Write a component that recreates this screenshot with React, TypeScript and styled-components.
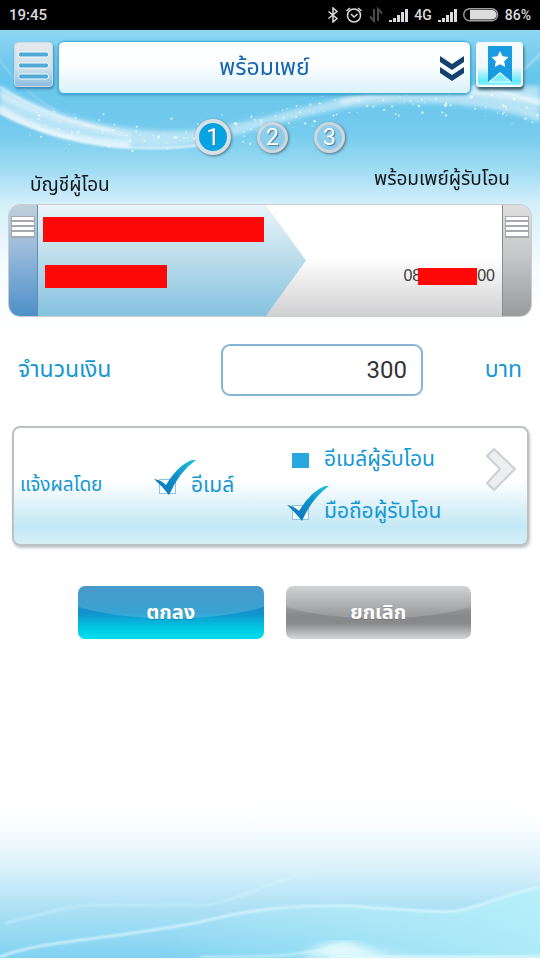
import React, { useState } from "react";
import styled, { createGlobalStyle } from "styled-components";

const thai = `"Noto Sans Thai", "Noto Sans", "Open Sans", "Liberation Sans", sans-serif`;

const GlobalStyle = createGlobalStyle`
  * { box-sizing: border-box; }
  body { margin: 0; background: #fff; font-family: ${thai}; }
  button, input, select { font: inherit; margin: 0; }
`;

const Page = styled.div`
  position: relative;
  display: flex;
  flex-direction: column;
  min-height: 100vh;
  overflow: hidden;
  background: #fff;
`;

const StatusBar = styled.header`
  display: flex;
  align-items: center;
  height: 30px;
  padding: 0 9px;
  background: #000;
  color: #dcdcdc;
  font: 500 15px/30px Roboto, sans-serif;
`;

const StatusIcons = styled.div`
  display: flex;
  align-items: center;
  gap: 6px;
  margin-left: auto;
  font-size: 14px;
  svg { display: block; }
`;

const Main = styled.main`
  position: relative;
  z-index: 0;
  display: flex;
  flex: 1;
  flex-direction: column;
`;

const Sky = styled.svg`
  position: absolute;
  z-index: -1;
  top: 0;
  left: 0;
  width: 100%;
  height: 300px;
`;

const Toolbar = styled.nav`
  display: flex;
  align-items: flex-start;
  gap: 5px;
  padding: 11px 17px 0 14px;
`;

const IconButton = styled.button<{ $wide?: boolean }>`
  width: ${(p) => (p.$wide ? 47 : 39)}px;
  height: 45px;
  margin-top: 1px;
  padding: 0;
  border: ${(p) => (p.$wide ? "2px solid #f4fbfe" : "1px solid #c5dbe8")};
  border-radius: 4px;
  background: ${(p) =>
    p.$wide
      ? "linear-gradient(#f7fcfe 0, #f0f9fd 55%, #5fe9fa 90%, #8ff2fc 100%)"
      : "linear-gradient(#e6e9ed 0, #cfdfea 60%, #8dbce2 100%)"};
  box-shadow: ${(p) => (p.$wide ? "1px 3px 3px #44606e" : "1px 2px 3px #3f87ae")};
  svg { display: block; margin: 0 auto; }
`;

const TitleBox = styled.div`
  position: relative;
  flex: 1;
  height: 53px;
  svg {
    position: absolute;
    top: 14px;
    right: 6px;
    pointer-events: none;
  }
`;

const TitleSelect = styled.select`
  width: 100%;
  height: 100%;
  padding: 0 40px;
  appearance: none;
  border: 1px solid #42afd9;
  border-radius: 6px;
  background: linear-gradient(#fff 0, #fcfeff 45%, #d9f2fb 100%);
  box-shadow: 0 1px 3px #2f93bd;
  color: #1766b0;
  font-size: 23px;
  text-align: center;
  text-align-last: center;
`;

const Steps = styled.ol`
  display: flex;
  align-items: center;
  justify-content: center;
  gap: 26px;
  height: 38px;
  margin: 24px 0 0;
  padding: 0;
  list-style: none;
`;

const Step = styled.li<{ $current?: boolean }>`
  width: ${(p) => (p.$current ? 36 : 31)}px;
  height: ${(p) => (p.$current ? 36 : 31)}px;
  border: ${(p) => (p.$current ? 4 : 3)}px solid ${(p) => (p.$current ? "#dae1e6" : "#cfd7dd")};
  border-radius: 50%;
  background: ${(p) => (p.$current ? "#06a3e2" : "#8ccdeb")};
  box-shadow: 1px 1px 3px #4f7486;
  color: #fff;
  font: ${(p) => (p.$current ? "24px/28px" : "23px/25px")} Roboto, sans-serif;
  text-align: center;
  text-shadow: 1px 1px 1px #4c7d96;
`;

const AccountLabels = styled.div`
  display: flex;
  align-items: flex-start;
  justify-content: space-between;
  height: 48px;
  padding: 8px 30px 0;
  color: #10171c;
  font-size: 19px;
  line-height: 32px;
`;

const FromLabel = styled.span`
  padding-top: 6px;
`;

const TransferCard = styled.section`
  display: grid;
  grid-template-columns: 29px 1fr 29px;
  height: 113px;
  margin: 0 8px;
  overflow: hidden;
  border: 1px solid #cacdcf;
  border-radius: 12px;
`;

const Tab = styled.button<{ $side: "from" | "to" }>`
  display: flex;
  justify-content: center;
  padding: 11px 0 0;
  border: 0;
  border-${(p) => (p.$side === "from" ? "right" : "left")}: 1px solid
    ${(p) => (p.$side === "from" ? "#6c8cab" : "#8b8d8f")};
  background: ${(p) =>
    p.$side === "from"
      ? "linear-gradient(#bfd0dc 0, #9abadb 40%, #4d90c9 100%)"
      : "linear-gradient(#dedede 0, #c6c7c8 45%, #9a9b9d 100%)"};
`;

const CardBody = styled.div`
  display: grid;
  grid-template-columns: 268px 1fr;
  background: linear-gradient(#fff 0, #fff 48%, #d0d0d2 100%);
`;

const Sender = styled.div`
  display: flex;
  flex-direction: column;
  gap: 23px;
  padding: 12px 5px;
  clip-path: polygon(0 0, 85% 0, 100% 50%, 85% 100%, 0 100%);
  background: linear-gradient(#e9f5fa 0, #c3e1ee 40%, #85c2df 100%);
`;

const Mask = styled.span<{ $w: number; $h: number; $indent?: boolean }>`
  flex: none;
  width: ${(p) => p.$w}px;
  height: ${(p) => p.$h}px;
  margin-left: ${(p) => (p.$indent ? 2 : 0)}px;
  background: #fd0707;
`;

const Phone = styled.div`
  display: flex;
  align-items: center;
  justify-content: flex-end;
  align-self: end;
  padding: 0 7px 30px 0;
  color: #3a3a3c;
  font: 16px/20px "Liberation Sans", sans-serif;
`;

const PhoneMask = styled(Mask)`
  margin-left: -3px;
`;

const AmountRow = styled.div`
  display: grid;
  grid-template-columns: 203px 202px 1fr;
  align-items: center;
  margin-top: 27px;
  padding: 0 18px;
  color: #1597d4;
  font-size: 23px;
  line-height: 40px;
`;

const AmountInput = styled.input`
  width: 100%;
  height: 52px;
  padding: 0 14px;
  border: 2px solid #86b4d4;
  border-radius: 9px;
  background: #fff;
  color: #333;
  font: 24px Roboto, sans-serif;
  text-align: right;
`;

const Unit = styled.span`
  text-align: right;
`;

const NotifyPanel = styled.section`
  display: grid;
  grid-template-columns: 139px 133px 1fr 32px;
  align-items: center;
  height: 120px;
  margin: 30px 11px 0 12px;
  padding: 0 10px 0 6px;
  border: 2px solid #bcc0c3;
  border-radius: 8px;
  background: linear-gradient(#fff 0, #fff 45%, #c3e8f5 85%, #d5f0f9 100%);
  box-shadow: 1px 2px 3px #c0c4c6;
  color: #1597d4;
  font-size: 21px;
  line-height: 32px;
`;

const NotifyTitle = styled.span`
  font-size: 19px;
`;

const Options = styled.div`
  display: flex;
  flex-direction: column;
  gap: 20px;
`;

const CheckLabel = styled.label`
  position: relative;
  display: flex;
  align-items: center;
  gap: 15px;
  white-space: nowrap;
  svg {
    position: absolute;
    left: -5px;
    top: -10px;
    pointer-events: none;
  }
`;

const Box = styled.input`
  flex: none;
  width: 17px;
  height: 15px;
  appearance: none;
  border: 1px solid #27a8e0;
  background: #27a8e0;
  &:checked {
    border-color: #8ac7e6;
    background: #f4fbfe;
  }
`;

const NextButton = styled.button`
  align-self: start;
  margin-top: 19px;
  padding: 0;
  border: 0;
  background: none;
  svg { display: block; }
`;

const Actions = styled.div`
  display: grid;
  grid-template-columns: 1fr 1fr;
  gap: 22px;
  margin: 40px 69px 0 78px;
`;

const ActionButton = styled.button<{ $primary?: boolean }>`
  height: 53px;
  padding: 0;
  border: 0;
  border-radius: 7px;
  background:
    radial-gradient(ellipse 66% 62% at 50% 0, rgba(255, 255, 255, 0.16) 97%, transparent 100%),
    ${(p) =>
      p.$primary
        ? "linear-gradient(#2786c1 0, #1391cb 50%, #00c4e2 78%, #00e0ef 100%)"
        : "linear-gradient(#c8c9ca 0, #88898b 55%, #88898b 70%, #d6d7d8 100%)"};
  color: #fff;
  font-size: 20px;
  font-weight: 700;
  line-height: 40px;
  text-shadow: 0 1px 1px rgba(0, 0, 0, 0.15);
`;

const Sea = styled.svg`
  display: block;
  width: 100%;
  height: 158px;
  margin: auto 0 2px;
`;

const Signal = () => (
  <svg width="19" height="13" viewBox="0 0 19 13" fill="#dcdcdc" aria-hidden="true">
    <path d="M0 11h3v2H0zM4 9h3v4H4zM8 6h3v7H8zM12 3h3v10h-3zM16 0h3v13h-3z" />
  </svg>
);

const Stripes = () => (
  <svg width="24" height="22" viewBox="0 0 24 22" aria-hidden="true">
    <path d="M0 0h24v22H0z" fill="#a3a9ae" />
    <path d="M1 1h22v3H1zM1 6h22v3H1zM1 11h22v3H1zM1 16h22v4H1z" fill="#fff" />
  </svg>
);

const Tick = () => (
  <svg width="44" height="36" viewBox="0 0 44 36" aria-hidden="true">
    <defs>
      <linearGradient id="tick" x1="0" y1="1" x2="1" y2="0">
        <stop offset="0" stopColor="#0a72b8" />
        <stop offset=".5" stopColor="#0d8dc9" />
        <stop offset="1" stopColor="#20c5d3" />
      </linearGradient>
    </defs>
    <path d="M0 19 Q7 20 12 25 Q24 5 38 0 L42 0 Q25 12 15 35 Q8 26 0 19Z" fill="url(#tick)" />
  </svg>
);

const pseudo = (n: number) => {
  const v = Math.sin(n * 12.9898) * 43758.5453;
  return v - Math.floor(v);
};

const specks = Array.from({ length: 170 }, (_, i) => {
  const x = 30 + pseudo(i + 1) * 510;
  const y = 88 - 16 * Math.cos(((x - 440) / 290) * Math.PI);
  const spread = (pseudo(i + 300) + pseudo(i + 600) - 1) * 20;
  return { x, y: y + spread, r: 0.5 + pseudo(i + 900), o: 0.3 + pseudo(i + 1200) * 0.5 };
});

const SkyDrawing = () => (
  <Sky viewBox="0 0 540 300" preserveAspectRatio="none" aria-hidden="true">
    <defs>
      <linearGradient id="sky" x1="0" y1="0" x2="0" y2="1">
        <stop offset="0" stopColor="#8fd6f2" />
        <stop offset=".15" stopColor="#66c5ec" />
        <stop offset=".34" stopColor="#74cbed" />
        <stop offset=".45" stopColor="#99daf3" />
        <stop offset=".58" stopColor="#d5effa" />
        <stop offset=".8" stopColor="#f7fcff" />
        <stop offset="1" stopColor="#fff" />
      </linearGradient>
      <linearGradient id="veil" x1="0" y1="0" x2="1" y2="0">
        <stop offset="0" stopColor="#fff" stopOpacity=".5" />
        <stop offset=".4" stopColor="#fff" stopOpacity=".45" />
        <stop offset="1" stopColor="#fff" stopOpacity=".5" />
      </linearGradient>
      <filter id="soft"><feGaussianBlur stdDeviation="2" /></filter>
      <filter id="crisp"><feGaussianBlur stdDeviation="1" /></filter>
    </defs>
    <path d="M0 0h540v300H0z" fill="url(#sky)" />
    <path
      d="M0 82 C50 108 110 118 165 117 C240 114 300 76 400 73 C460 72 500 78 540 92 V56 C480 56 440 58 400 60 C320 66 250 98 180 101 C110 102 50 84 0 56Z"
      fill="url(#veil)"
      filter="url(#soft)"
    />
    <g fill="none" stroke="#fff">
      <g filter="url(#soft)">
        <path d="M-5 76 C40 104 80 111 130 115" strokeWidth="5" opacity=".8" />
        <path d="M-5 62 C50 92 90 96 130 106" strokeWidth="4" opacity=".5" />
        <path d="M340 72 C400 56 470 58 545 72" strokeWidth="6" opacity=".5" />
      </g>
      <g filter="url(#crisp)">
        <path d="M-5 80 C50 110 110 119 160 118 C180 118 200 116 220 110" strokeWidth="2" opacity=".8" />
        <path d="M-5 54 C30 78 70 92 110 100" strokeWidth="2" opacity=".6" />
        <path d="M-5 24 C12 48 30 66 56 80" strokeWidth="1" opacity=".5" />
        <path d="M460 56 C490 56 520 66 545 76" strokeWidth="2" opacity=".6" />
        <path d="M500 52 C520 44 532 34 545 18" strokeWidth="2" opacity=".4" />
      </g>
    </g>
    {specks.map((s, i) => (
      <circle key={i} cx={s.x} cy={s.y} r={s.r} fill="#fff" opacity={s.o} />
    ))}
  </Sky>
);

const SeaDrawing = () => (
  <Sea viewBox="0 0 540 158" preserveAspectRatio="none" aria-hidden="true">
    <defs>
      <linearGradient id="sea" x1="0" y1="0" x2="0" y2="1">
        <stop offset="0" stopColor="#fff" />
        <stop offset=".15" stopColor="#fbfeff" />
        <stop offset=".42" stopColor="#dcf2fb" />
        <stop offset=".68" stopColor="#aee1f5" />
        <stop offset="1" stopColor="#80d2f1" />
      </linearGradient>
      <linearGradient id="glow" x1="0" y1="0" x2="1" y2="0">
        <stop offset=".3" stopColor="#b5f0fa" stopOpacity="0" />
        <stop offset="1" stopColor="#b5f0fa" stopOpacity=".85" />
      </linearGradient>
      <filter id="mist"><feGaussianBlur stdDeviation="1" /></filter>
      <filter id="foam"><feGaussianBlur stdDeviation="5" /></filter>
    </defs>
    <path d="M0 0h540v158H0z" fill="url(#sea)" />
    <path d="M0 158 C70 138 130 138 200 122 C250 110 290 105 350 106 C400 109 430 113 455 111 C480 108 500 95 540 87 V158Z" fill="url(#glow)" />
    <g fill="none" stroke="#dcf8ff" filter="url(#mist)">
      <path d="M0 157 C40 140 110 140 200 122 C250 109 290 105 350 106 C400 109 430 113 455 111 C480 108 500 95 540 87" strokeWidth="2" />
      <path d="M5 123 C40 116 60 106 100 105 C140 104 170 107 205 105 C240 101 280 76 320 70 C370 68 420 71 480 70" strokeWidth="2" opacity=".5" />
      <path d="M200 157 C280 157 300 156 345 144" strokeWidth="2" opacity=".7" />
      <path d="M330 157H540" strokeWidth="3" />
    </g>
    <path d="M300 158 C320 146 335 140 352 143 C370 148 380 156 430 158Z" fill="#e8fcff" filter="url(#foam)" />
  </Sea>
);

function Check({ text, initial }: { text: string; initial?: boolean }) {
  const [on, setOn] = useState(!!initial);
  return (
    <CheckLabel>
      <Box type="checkbox" checked={on} onChange={(e) => setOn(e.target.checked)} />
      {on && <Tick />}
      {text}
    </CheckLabel>
  );
}

export default function App() {
  const [amount, setAmount] = useState("300");
  return (
    <Page>
      <GlobalStyle />
      <StatusBar>
        <span>19:45</span>
        <StatusIcons>
          <svg width="12" height="16" viewBox="0 0 12 16" fill="none" stroke="#dcdcdc" strokeWidth="1.500" aria-hidden="true">
            <path d="M1.500 4.500 10 11.500 6 15V1l4 3.500-8.500 7" />
          </svg>
          <svg width="18" height="16" viewBox="0 0 18 16" fill="none" stroke="#dcdcdc" strokeWidth="1.500" aria-hidden="true">
            <circle cx="9" cy="8.500" r="6.500" />
            <path d="M1.500 4 5 1M16.500 4 13 1M6 7l3 3 3.500-3" />
          </svg>
          <svg width="14" height="16" viewBox="0 0 14 16" fill="none" stroke="#4a4a4a" strokeWidth="2" aria-hidden="true">
            <path d="M5 2v12L1 9.500M9 14V2l4 4.500" />
          </svg>
          <Signal />
          <span>4G</span>
          <Signal />
          <svg width="36" height="14" viewBox="0 0 36 14" aria-hidden="true">
            <rect x=".7" y=".7" width="34" height="12" rx="6" fill="none" stroke="#a0a0a0" strokeWidth="1.400" />
            <path d="M7 2h22a4.700 4.700 0 0 1 0 9.400H7z" fill="#dcdcdc" />
          </svg>
          <span>86%</span>
        </StatusIcons>
      </StatusBar>

      <Main>
        <SkyDrawing />
        <Toolbar>
          <IconButton aria-label="เมนู">
            <svg width="31" height="32" viewBox="0 0 31 32" aria-hidden="true">
              <g fill="#50a9d6" stroke="#f2fbff" strokeWidth="1">
                <rect x=".5" y="3" width="30" height="5" rx="2" />
                <rect x=".5" y="14" width="30" height="5" rx="2" />
                <rect x=".5" y="25" width="30" height="5" rx="2" />
              </g>
            </svg>
          </IconButton>
          <TitleBox>
            <TitleSelect aria-label="บริการ" defaultValue="pp">
              <option value="pp">พร้อมเพย์</option>
            </TitleSelect>
            <svg width="26" height="28" viewBox="0 0 26 28" fill="#15406f" aria-hidden="true">
              <path d="M1 1 13 9 25 1V7L13 15 1 7ZM1 12 13 20 25 12V18L13 26 1 18Z" />
            </svg>
          </TitleBox>
          <IconButton $wide aria-label="รายการโปรด">
            <svg width="26" height="37" viewBox="0 0 26 37" aria-hidden="true">
              <path d="M1 0h24v36L13 26 1 36Z" fill="#199be2" />
              <path d="M13 27 24 36H2Z" fill="#7deefa" stroke="#f2feff" strokeWidth="1" />
              <path d="m13 5 2.600 5.300 5.900.8-4.300 4.100 1 5.800L13 18.300 7.800 21l1-5.800-4.300-4.100 5.900-.8Z" fill="#fff" />
            </svg>
          </IconButton>
        </Toolbar>

        <Steps>
          <Step $current aria-current="step">1</Step>
          <Step>2</Step>
          <Step>3</Step>
        </Steps>

        <AccountLabels>
          <FromLabel>บัญชีผู้โอน</FromLabel>
          <span>พร้อมเพย์ผู้รับโอน</span>
        </AccountLabels>

        <TransferCard>
          <Tab $side="from" aria-label="เลือกบัญชี"><Stripes /></Tab>
          <CardBody>
            <Sender>
              <Mask $w={221} $h={25} />
              <Mask $w={122} $h={23} $indent />
            </Sender>
            <Phone>
              <span>08</span>
              <PhoneMask $w={59} $h={17} />
              <span>00</span>
            </Phone>
          </CardBody>
          <Tab $side="to" aria-label="เลือกผู้รับ"><Stripes /></Tab>
        </TransferCard>

        <AmountRow>
          <label htmlFor="amount">จำนวนเงิน</label>
          <AmountInput id="amount" value={amount} onChange={(e) => setAmount(e.target.value)} />
          <Unit>บาท</Unit>
        </AmountRow>

        <NotifyPanel>
          <NotifyTitle>แจ้งผลโดย</NotifyTitle>
          <Check text="อีเมล์" initial />
          <Options>
            <Check text="อีเมล์ผู้รับโอน" />
            <Check text="มือถือผู้รับโอน" initial />
          </Options>
          <NextButton aria-label="ถัดไป">
            <svg width="32" height="46" viewBox="0 0 32 46" aria-hidden="true">
              <path d="M9 2 30 22 9 43 2 36 15 22 2 9Z" fill="#eceeef" stroke="#cdd0d2" strokeWidth="2" strokeLinejoin="round" />
            </svg>
          </NextButton>
        </NotifyPanel>

        <Actions>
          <ActionButton $primary>ตกลง</ActionButton>
          <ActionButton>ยกเลิก</ActionButton>
        </Actions>

        <SeaDrawing />
      </Main>
    </Page>
  );
}
